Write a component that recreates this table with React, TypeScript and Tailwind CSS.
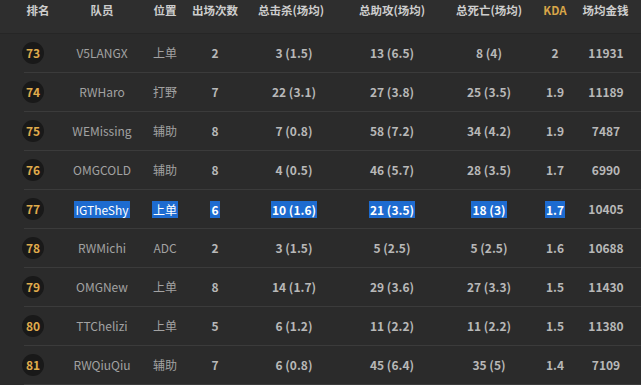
const rows = [
  { rank: 73, name: "V5LANGX", pos: "上单", games: "2", kills: "3 (1.5)", assists: "13 (6.5)", deaths: "8 (4)", kda: "2", gold: "11931" },
  { rank: 74, name: "RWHaro", pos: "打野", games: "7", kills: "22 (3.1)", assists: "27 (3.8)", deaths: "25 (3.5)", kda: "1.9", gold: "11189" },
  { rank: 75, name: "WEMissing", pos: "辅助", games: "8", kills: "7 (0.8)", assists: "58 (7.2)", deaths: "34 (4.2)", kda: "1.9", gold: "7487" },
  { rank: 76, name: "OMGCOLD", pos: "辅助", games: "8", kills: "4 (0.5)", assists: "46 (5.7)", deaths: "28 (3.5)", kda: "1.7", gold: "6990" },
  { rank: 77, name: "IGTheShy", pos: "上单", games: "6", kills: "10 (1.6)", assists: "21 (3.5)", deaths: "18 (3)", kda: "1.7", gold: "10405", selected: true },
  { rank: 78, name: "RWMichi", pos: "ADC", games: "2", kills: "3 (1.5)", assists: "5 (2.5)", deaths: "5 (2.5)", kda: "1.6", gold: "10688" },
  { rank: 79, name: "OMGNew", pos: "上单", games: "8", kills: "14 (1.7)", assists: "29 (3.6)", deaths: "27 (3.3)", kda: "1.5", gold: "11430" },
  { rank: 80, name: "TTChelizi", pos: "上单", games: "5", kills: "6 (1.2)", assists: "11 (2.2)", deaths: "11 (2.2)", kda: "1.5", gold: "11380" },
  { rank: 81, name: "RWQiuQiu", pos: "辅助", games: "7", kills: "6 (0.8)", assists: "45 (6.4)", deaths: "35 (5)", kda: "1.4", gold: "7109" },
]

function Cell({ text, sel, bold }: { text: string; sel?: boolean; bold?: boolean }) {
  const color = sel ? "bg-[#1d6bd0] text-white px-[1px] leading-[17px]" : bold ? "text-[#b8b8b8]" : "text-[#a2a2a2]"
  return (
    <div className="flex justify-center whitespace-nowrap">
      <span className={`${color} ${bold ? "font-bold" : ""}`}>{text}</span>
    </div>
  )
}

export default function App() {
  return (
    <div
      className="w-[641px] h-[385px] overflow-hidden bg-[#2b2b2b] text-[12px]"
      style={{ fontFamily: '"Noto Sans CJK SC", "Liberation Sans", sans-serif' }}
    >
      {/* Header */}
      <div className="h-[34px] bg-[#2e2e2e] border-b border-[#262626] grid grid-cols-[72px_60px_66px_34px_118px_84px_110px_22px_79px] pb-[12px] items-center font-bold text-[#cdcdcd] text-[11.5px]">
        <div className="flex justify-center pl-1">排名</div>
        <div className="flex justify-center">队员</div>
        <div className="flex justify-center">位置</div>
        <div className="flex justify-center whitespace-nowrap">出场次数</div>
        <div className="flex justify-center whitespace-nowrap">总击杀(场均)</div>
        <div className="flex justify-center whitespace-nowrap">总助攻(场均)</div>
        <div className="flex justify-center whitespace-nowrap">总死亡(场均)</div>
        <div className="flex justify-center text-[#d8a548]">KDA</div>
        <div className="flex justify-center whitespace-nowrap">场均金钱</div>
      </div>

      {/* Rows */}
      {rows.map((r) => (
        <div
          key={r.rank}
          className="ml-6 h-[39px] border-b border-[#3b3b3b] grid grid-cols-[48px_60px_66px_34px_124px_72px_122px_10px_92px] items-center"
        >
          <div className="flex">
            <div className="-ml-[2px] w-[22px] h-[22px] rounded-full bg-[#191919] flex items-center justify-center text-[12px] font-bold text-[#e0ac4c]">
              {r.rank}
            </div>
          </div>
          <Cell text={r.name} sel={r.selected} />
          <Cell text={r.pos} sel={r.selected} />
          <Cell text={r.games} sel={r.selected} bold />
          <Cell text={r.kills} sel={r.selected} bold />
          <Cell text={r.assists} sel={r.selected} bold />
          <Cell text={r.deaths} sel={r.selected} bold />
          <Cell text={r.kda} sel={r.selected} bold />
          <Cell text={r.gold} bold />
        </div>
      ))}
    </div>
  )
}
